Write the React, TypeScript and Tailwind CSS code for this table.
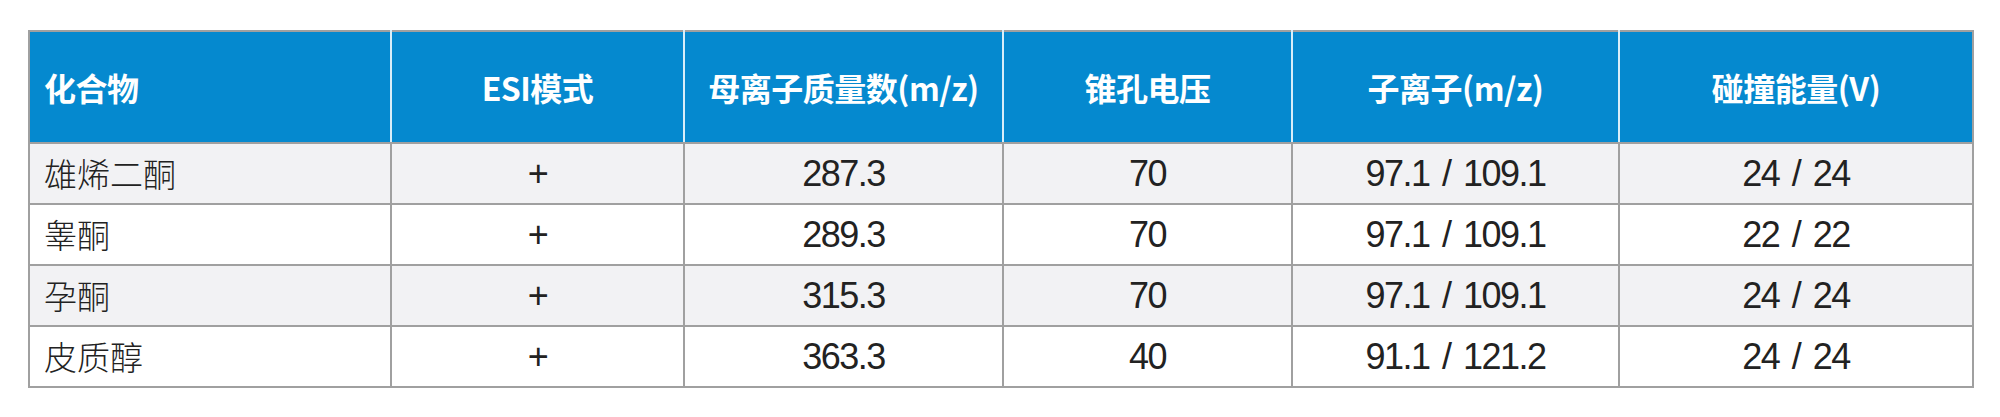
import React from 'react';

const headers = ['化合物', 'ESI模式', '母离子质量数(m/z)', '锥孔电压', '子离子(m/z)', '碰撞能量(V)'];

const rows = [
  ['雄烯二酮', '+', '287.3', '70', '97.1 / 109.1', '24 / 24'],
  ['睾酮', '+', '289.3', '70', '97.1 / 109.1', '22 / 22'],
  ['孕酮', '+', '315.3', '70', '97.1 / 109.1', '24 / 24'],
  ['皮质醇', '+', '363.3', '40', '91.1 / 121.2', '24 / 24'],
];

const widths = ['w-[362px]', 'w-[293px]', 'w-[319px]', 'w-[289px]', 'w-[327px]', 'w-[354px]'];

const App = () => {
  return (
    <div className="w-[2000px] h-[417px] bg-white pt-[30px] pl-[28px]">
      <table className="table-fixed border-collapse w-[1944px] border-2 border-[#a0a0a0]">
        <colgroup>
          {widths.map((w, i) => (
            <col key={i} className={w} />
          ))}
        </colgroup>
        <thead>
          <tr className="h-[112px] bg-[#0589cf]">
            {headers.map((h, i) => (
              <th
                key={h}
                className={`border-b-2 border-b-[#a0a0a0] ${i > 0 ? 'border-l-2 border-l-[#d8eef9]' : ''} ${
                  i === 0 ? 'text-left pl-[14px]' : 'text-center'
                } text-white font-bold text-[32px] leading-none tracking-[-0.5px] [font-family:'Noto_Sans_CJK_SC',sans-serif]`}
              >
                {h}
              </th>
            ))}
          </tr>
        </thead>
        <tbody>
          {rows.map((r, ri) => (
            <tr key={ri} className={`h-[61px] ${ri % 2 === 0 ? 'bg-[#f2f2f4]' : 'bg-white'}`}>
              {r.map((c, ci) => (
                <td
                  key={ci}
                  className={`border-2 border-[#a0a0a0] text-[#222] leading-none ${
                    ci === 0
                      ? "text-left pl-[14px] text-[33px] font-light [font-family:'Noto_Sans_CJK_SC',sans-serif]"
                      : "text-center text-[36px] tracking-[-1.5px] [word-spacing:4px] [font-family:'Liberation_Sans','Noto_Sans_CJK_SC',sans-serif]"
                  }`}
                >
                  {c}
                </td>
              ))}
            </tr>
          ))}
        </tbody>
      </table>
    </div>
  );
};

export default App;
